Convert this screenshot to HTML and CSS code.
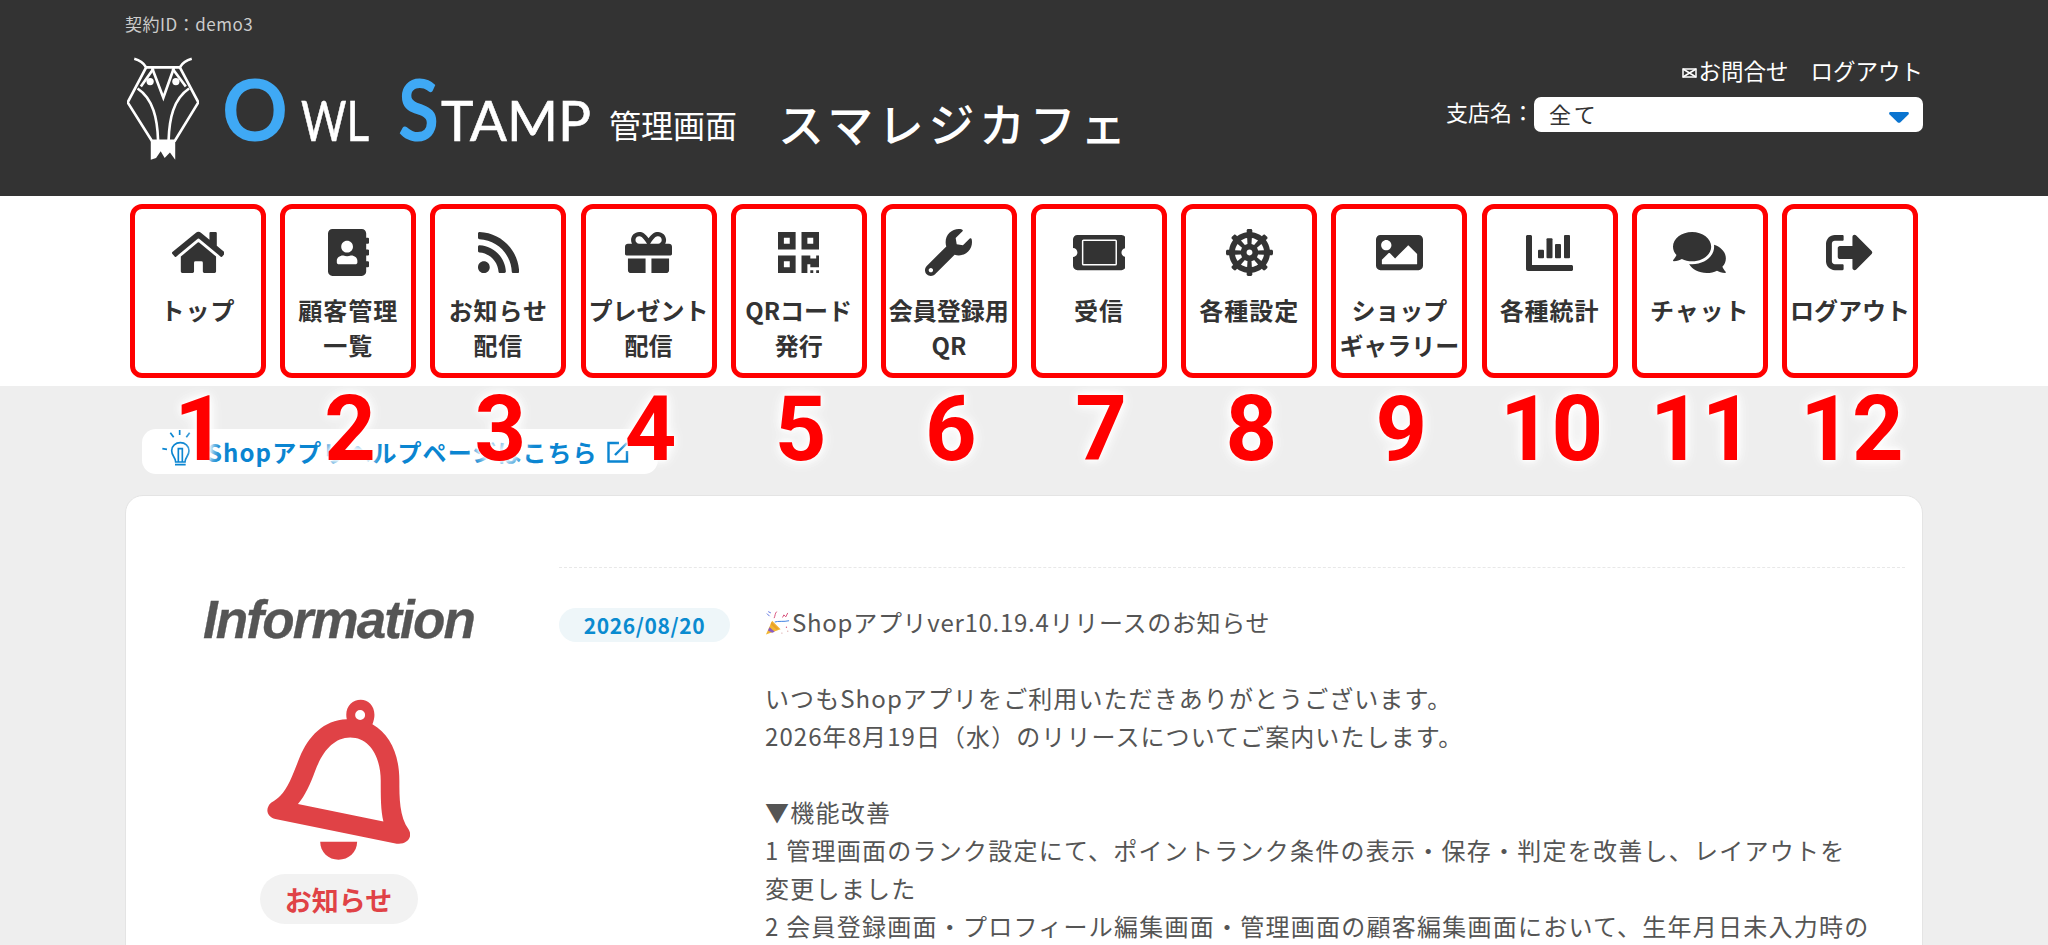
FILE: index.html
```html
<!DOCTYPE html>
<html lang="ja">
<head>
  <meta charset="UTF-8" />
  <title>OWL STAMP 管理画面</title>
  <link rel="stylesheet" href="styles.css">
</head>
<body>

  <!-- Header -->
  <header class="header">
    <div class="header-inner">
      <div class="contract">契約ID：demo3</div>
      <div class="header-row">
        <div class="brand">
          <svg class="owl" viewBox="20 14 218 312" fill="none" stroke="#fff" stroke-width="8">
            <path d="M42 18C58 22 70 30 78 44H180C188 30 200 22 216 18" />
            <path d="M78 44L22 150L95 266H165L236 150L180 44" />
            <path d="M96 46L130 136L162 46" />
            <path d="M100 48L62 102M158 48L198 102" />
            <path d="M52 108C100 140 112 200 114 264M208 108C160 140 148 200 146 264" />
            <circle cx="90" cy="87" r="11" fill="#fff" stroke="none" />
            <circle cx="168" cy="87" r="11" fill="#fff" stroke="none" />
            <path d="M92 268H166V324L150 302L134 318L122 298L108 318L92 324Z" fill="#fff" stroke="none" />
          </svg>
          <svg class="logo-text" viewBox="-10 -20 384 110">
            <text class="logo-big" x="-4" y="71" textLength="66" lengthAdjust="spacingAndGlyphs">O</text>
            <text class="logo-small" x="75" y="71" textLength="68" lengthAdjust="spacingAndGlyphs">WL</text>
            <text class="logo-big" x="172" y="71" textLength="41" lengthAdjust="spacingAndGlyphs">S</text>
            <text class="logo-small" x="215" y="71" textLength="150" lengthAdjust="spacingAndGlyphs">TAMP</text>
          </svg>
          <span class="brand-sub">管理画面</span>
          <span class="shop-name">スマレジカフェ</span>
        </div>
        <div class="header-right">
          <div class="header-links">
            <svg class="mail" viewBox="0 0 15 10" fill="none" stroke="#fff" stroke-width="1.5">
              <rect x="1" y="1" width="13" height="8" />
              <path d="M1 1L14 9M14 1L1 9" />
            </svg>
            <span>お問合せ</span>
            <span class="logout-link">ログアウト</span>
          </div>
          <div class="branch">
            <span class="branch-label">支店名：</span>
            <div class="branch-select">
              <span class="branch-value">全て</span>
              <svg class="select-arrow" viewBox="0 0 20 11"><path d="M1.5 0H18.5C19.8 0 20.4 1.4 19.4 2.4L11.2 10.4C10.5 11 9.5 11 8.8 10.4L.6 2.4C-.4 1.4.2 0 1.5 0Z" /></svg>
            </div>
          </div>
        </div>
      </div>
    </div>
  </header>

  <!-- Menu -->
  <nav class="nav">
    <a class="nav-item">
      <svg class="nav-icon" viewBox="0 0 576 512"><path d="M280.37 148.26L96 300.11V464a16 16 0 0 0 16 16l112.06-.29a16 16 0 0 0 15.92-16V368a16 16 0 0 1 16-16h64a16 16 0 0 1 16 16v95.64a16 16 0 0 0 16 16.05L464 480a16 16 0 0 0 16-16V300L295.67 148.26a12.19 12.19 0 0 0-15.3 0zM571.6 251.47L488 182.56V44.05a12 12 0 0 0-12-12h-56a12 12 0 0 0-12 12v72.61L318.47 43a48 48 0 0 0-61 0L4.34 251.47a12 12 0 0 0-1.6 16.9l25.5 31A12 12 0 0 0 45.15 301l235.22-193.74a12.19 12.19 0 0 1 15.3 0L530.9 301a12 12 0 0 0 16.9-1.6l25.5-31a12 12 0 0 0-1.7-16.93z" /></svg>
      <span class="nav-label">トップ</span>
    </a>
    <a class="nav-item">
      <svg class="nav-icon" viewBox="0 0 448 512"><path d="M436 160c6.6 0 12-5.4 12-12v-40c0-6.6-5.4-12-12-12h-20V48c0-26.5-21.5-48-48-48H48C21.5 0 0 21.5 0 48v416c0 26.5 21.5 48 48 48h320c26.5 0 48-21.5 48-48v-48h20c6.6 0 12-5.4 12-12v-40c0-6.6-5.4-12-12-12h-20v-64h20c6.6 0 12-5.4 12-12v-40c0-6.6-5.4-12-12-12h-20v-64h20zm-228-32c35.3 0 64 28.7 64 64s-28.7 64-64 64-64-28.7-64-64 28.7-64 64-64zm112 236.8c0 10.6-10 19.2-22.4 19.2H118.4C106 384 96 375.4 96 364.8v-19.2c0-31.8 30.1-57.6 67.2-57.6h5c12.3 5.1 25.7 8 39.8 8s27.6-2.9 39.8-8h5c37.1 0 67.2 25.8 67.2 57.6v19.2z" /></svg>
      <span class="nav-label">顧客管理<br>一覧</span>
    </a>
    <a class="nav-item">
      <svg class="nav-icon" viewBox="0 0 448 512"><path d="M128.081 415.959c0 35.369-28.672 64.041-64.041 64.041S0 451.328 0 415.959s28.672-64.041 64.041-64.041 64.04 28.673 64.04 64.041zm175.66 47.25c-8.354-154.6-132.185-278.587-286.95-286.95C7.656 175.765 0 183.105 0 192.253v48.069c0 8.415 6.49 15.472 14.887 16.018 111.832 7.284 201.473 96.702 208.772 208.772.547 8.397 7.604 14.887 16.018 14.887h48.069c9.149.001 16.489-7.655 15.995-16.79zm144.249.288C439.596 229.677 251.465 40.445 16.503 32.01 7.473 31.686 0 38.981 0 48.016v48.068c0 8.625 6.835 15.645 15.453 15.999 191.179 7.839 344.627 161.316 352.465 352.465.353 8.618 7.373 15.453 15.999 15.453h48.068c9.034-.001 16.329-7.474 16.005-16.504z" /></svg>
      <span class="nav-label">お知らせ<br>配信</span>
    </a>
    <a class="nav-item">
      <svg class="nav-icon" viewBox="0 0 512 512"><path d="M32 448c0 17.7 14.3 32 32 32h160V320H32v128zm256 32h160c17.7 0 32-14.3 32-32V320H288v160zm192-320h-42.1c6.2-12.1 10.1-25.5 10.1-40 0-48.5-39.5-88-88-88-41.6 0-68.5 21.3-103 68.3-34.5-47-61.4-68.3-103-68.3-48.5 0-88 39.5-88 88 0 14.5 3.8 27.9 10.1 40H32c-17.7 0-32 14.3-32 32v80c0 8.8 7.2 16 16 16h480c8.8 0 16-7.2 16-16v-80c0-17.7-14.3-32-32-32zm-326.1 0c-22.1 0-40-17.9-40-40s17.9-40 40-40c19.9 0 34.6 3.3 86.1 80h-86.1zm206.1 0h-86.1c51.4-76.5 65.7-80 86.1-80 22.1 0 40 17.9 40 40s-17.9 40-40 40z" /></svg>
      <span class="nav-label tight">プレゼント<br>配信</span>
    </a>
    <a class="nav-item">
      <svg class="nav-icon" viewBox="0 0 448 512"><path d="M0 224h192V32H0v192zM64 96h64v64H64V96zm192-64v192h192V32H256zm128 128h-64V96h64v64zM0 480h192V288H0v192zm64-128h64v64H64v-64zm352-64h32v128h-96v-32h-32v96h-64V288h96v32h64v-32zm0 160h32v32h-32v-32zm-64 0h32v32h-32v-32z" /></svg>
      <span class="nav-label tight">QRコード<br>発行</span>
    </a>
    <a class="nav-item">
      <svg class="nav-icon" viewBox="0 0 512 512"><path d="M507.73 109.1c-2.24-9.03-13.54-12.09-20.12-5.51l-74.36 74.36-67.88-11.31-11.31-67.88 74.36-74.36c6.62-6.62 3.43-17.9-5.66-20.16-47.38-11.74-99.55.91-136.58 37.93-39.64 39.64-50.55 97.1-34.05 147.2L18.74 402.76c-24.99 24.99-24.99 65.51 0 90.5 24.99 24.99 65.51 24.99 90.5 0l213.21-213.21c50.12 16.71 107.47 5.68 147.37-34.22 37.07-37.07 49.7-89.32 37.91-136.73zM64 472c-13.25 0-24-10.75-24-24 0-13.26 10.75-24 24-24s24 10.74 24 24c0 13.25-10.75 24-24 24z" /></svg>
      <span class="nav-label tight">会員登録用<br>QR</span>
    </a>
    <a class="nav-item">
      <svg class="nav-icon" viewBox="0 0 576 512"><path d="M528 256c0 26.51 21.49 48 48 48v96c0 26.51-21.49 48-48 48H48c-26.51 0-48-21.49-48-48v-96c26.51 0 48-21.49 48-48s-21.49-48-48-48v-96c0-26.51 21.49-48 48-48h480c26.51 0 48 21.49 48 48v96c-26.51 0-48 21.49-48 48z" /><rect x="105" y="122" width="366" height="268" rx="10" fill="none" stroke="#fff" stroke-width="16" /></svg>
      <span class="nav-label">受信</span>
    </a>
    <a class="nav-item">
      <svg class="nav-icon" viewBox="0 0 512 512"><path d="M495 225.06l-17.22 1.08c-5.27-39.49-20.79-75.64-43.86-105.84l12.95-11.43c6.92-6.11 7.25-16.79.73-23.31L426.44 64.4c-6.53-6.53-17.21-6.19-23.31.73L391.7 78.07c-30.2-23.07-66.35-38.59-105.84-43.86L286.94 17c.58-9.21-6.74-17-15.97-17h-29.94c-9.23 0-16.54 7.79-15.97 17l1.08 17.22c-39.49 5.27-75.64 20.79-105.84 43.86l-11.43-12.95c-6.11-6.92-16.79-7.25-23.31-.73L64.4 85.56c-6.53 6.53-6.19 17.21.73 23.31l12.95 11.43c-23.07 30.2-38.59 66.35-43.86 105.84L17 225.06c-9.21-.58-17 6.74-17 15.97v29.94c0 9.23 7.79 16.54 17 15.97l17.22-1.08c5.27 39.49 20.79 75.64 43.86 105.84l-12.95 11.43c-6.92 6.11-7.25 16.79-.73 23.31l21.16 21.16c6.53 6.53 17.21 6.19 23.31-.73l11.43-12.95c30.2 23.07 66.35 38.59 105.84 43.86L225.06 495c-.58 9.21 6.74 17 15.97 17h29.94c9.23 0 16.54-7.79 15.97-17l-1.08-17.22c39.49-5.27 75.64-20.79 105.84-43.86l11.43 12.95c6.11 6.92 16.79 7.25 23.31.73l21.16-21.16c6.53-6.53 6.19-17.21-.73-23.31l-12.95-11.43c23.07-30.2 38.59-66.35 43.86-105.84l17.22 1.08c9.21.58 17-6.74 17-15.97v-29.94c.01-9.23-7.78-16.55-16.99-15.97zM281.84 98.61c24.81 4.07 47.63 13.66 67.23 27.78l-42.62 48.29c-8.73-5.44-18.32-9.54-28.62-11.95l4.01-64.12zm-51.68 0l4.01 64.12c-10.29 2.41-19.89 6.52-28.62 11.95l-42.62-48.29c19.6-14.12 42.42-23.71 67.23-27.78zm-103.77 64.33l48.3 42.61c-5.44 8.73-9.54 18.33-11.96 28.62l-64.12-4.01c4.07-24.81 13.66-47.62 27.78-67.22zm-27.78 118.9l64.12-4.01c2.41 10.29 6.52 19.89 11.95 28.62l-48.29 42.62c-14.12-19.6-23.71-42.42-27.78-67.23zm131.59 131.55c-24.81-4.07-47.63-13.66-67.23-27.78l42.61-48.3c8.73 5.44 18.33 9.54 28.62 11.96l-4 64.12zM256 288c-17.67 0-32-14.33-32-32s14.33-32 32-32 32 14.33 32 32-14.33 32-32 32zm25.84 125.39l-4.01-64.12c10.29-2.41 19.89-6.52 28.62-11.95l42.62 48.29c-19.6 14.12-42.42 23.71-67.23 27.78zm103.77-64.33l-48.29-42.62c5.44-8.73 9.54-18.32 11.95-28.62l64.12 4.01c-4.07 24.82-13.66 47.64-27.78 67.23zm-36.34-114.89c-2.41-10.29-6.52-19.89-11.95-28.62l48.29-42.62c14.12 19.6 23.71 42.42 27.78 67.23l-64.12 4.01z" /></svg>
      <span class="nav-label">各種設定</span>
    </a>
    <a class="nav-item">
      <svg class="nav-icon" viewBox="0 0 512 512"><path d="M464 448H48c-26.51 0-48-21.49-48-48V112c0-26.51 21.49-48 48-48h416c26.51 0 48 21.49 48 48v288c0 26.51-21.49 48-48 48zM112 120c-30.928 0-56 25.072-56 56s25.072 56 56 56 56-25.072 56-56-25.072-56-56-56zM64 384h384V272l-87.515-87.515c-4.686-4.686-12.284-4.686-16.971 0L208 320l-55.515-55.515c-4.686-4.686-12.284-4.686-16.971 0L64 336v48z" /></svg>
      <span class="nav-label tight">ショップ<br>ギャラリー</span>
    </a>
    <a class="nav-item">
      <svg class="nav-icon" viewBox="0 0 47 47">
        <path d="M0 7.5C0 6.7.7 6 1.5 6H4.5C5.3 6 6 6.7 6 7.5V36H45.5C46.3 36 47 36.7 47 37.5V40.5C47 41.3 46.3 42 45.5 42H2C.9 42 0 41.1 0 40Z" />
        <rect x="12" y="20.7" width="6" height="8.6" rx="1" />
        <rect x="20.5" y="9.3" width="6" height="20" rx="1" />
        <rect x="29" y="15" width="6" height="14.3" rx="1" />
        <rect x="38" y="6" width="6" height="23.3" rx="1" />
      </svg>
      <span class="nav-label">各種統計</span>
    </a>
    <a class="nav-item">
      <svg class="nav-icon" viewBox="0 0 576 512"><path d="M416 192c0-88.4-93.1-160-208-160S0 103.6 0 192c0 34.3 14.1 65.9 38 92-13.4 30.2-35.5 54.2-35.8 54.5-2.2 2.3-2.8 5.7-1.5 8.7S4.8 352 8 352c36.6 0 66.9-12.3 88.7-25 32.2 15.7 70.3 25 111.3 25 114.9 0 208-71.6 208-160zm122 220c23.9-26 38-57.7 38-92 0-66.9-53.5-124.2-129.3-148.1.9 6.6 1.3 13.3 1.3 20.1 0 105.9-107.7 192-240 192-10.8 0-21.3-.8-31.7-1.9C207.8 439.6 281.8 480 368 480c41 0 79.1-9.2 111.3-25 21.8 12.7 52.1 25 88.7 25 3.2 0 6.1-1.9 7.3-4.8 1.3-2.9.7-6.3-1.5-8.7-.3-.3-22.4-24.2-35.8-54.5z" /></svg>
      <span class="nav-label">チャット</span>
    </a>
    <a class="nav-item">
      <svg class="nav-icon" viewBox="0 0 512 512"><path d="M497 273L329 441c-15 15-41 4.5-41-17v-96H152c-13.3 0-24-10.7-24-24v-96c0-13.3 10.7-24 24-24h136V88c0-21.4 25.9-32 41-17l168 168c9.3 9.4 9.3 24.6 0 34zM192 436v-40c0-6.6-5.4-12-12-12H96c-17.7 0-32-14.3-32-32V160c0-17.7 14.3-32 32-32h84c6.6 0 12-5.4 12-12V76c0-6.6-5.4-12-12-12H96c-53 0-96 43-96 96v192c0 53 43 96 96 96h84c6.6 0 12-5.4 12-12z" /></svg>
      <span class="nav-label tight">ログアウト</span>
    </a>
  </nav>

  <main class="main">
    <!-- Red numbers lie over the help link -->
    <div class="numbers">
      <span>1</span><span>2</span><span>3</span><span>4</span><span>5</span><span>6</span>
      <span>7</span><span>8</span><span>9</span><span>10</span><span>11</span><span>12</span>
    </div>

    <a class="help-link">
      <svg class="bulb" viewBox="60 30 90 108" fill="none" stroke="#0a85d1" stroke-width="5">
        <path d="M64 86L78 88M88 38L98 52M116 30V45M146 38L136 52" />
        <path d="M104 126C104 112 92 108 92 92C92 78 104 68 118 68C132 68 144 78 144 92C144 108 132 112 132 126Z" />
        <path d="M112 126V86H124V126M102 134H134" />
      </svg>
      <span>Shopアプリヘルプページはこちら</span>
      <svg class="ext" viewBox="0 0 22 22" fill="none" stroke="#0a85d1" stroke-width="2.4">
        <path d="M12 2H1.5V20.5H20V10" />
        <path d="M8 14L20 2" />
      </svg>
    </a>

    <section class="card">
      <div class="card-side">
        <h1 class="info-title">Information</h1>
        <svg class="bell" viewBox="440 415 430 485">
          <path fill-rule="evenodd" d="M445 735C452 722 462 724 480 705C505 680 518 640 538 590C565 525 610 478 680 475C672 440 695 416 722 416C750 416 775 445 757 490C810 520 838 580 838 660C838 710 838 770 866 806C880 830 860 853 830 849L465 775C445 770 435 752 445 735ZM533 730L790 782C782 750 782 710 782 660C782 590 750 530 690 530C640 530 605 575 585 630C570 670 555 705 533 730ZM720 447A15 15 0 1 0 720.1 477A15 15 0 1 0 720 447Z" />
          <path d="M600 843H711C711 875 685 897 655 897C625 897 600 875 600 843Z" />
        </svg>
        <div class="notice-pill">お知らせ</div>
      </div>
      <div class="card-body">
        <div class="entry">
          <div class="entry-date">2026/08/20</div>
          <div class="entry-text">
            <div class="entry-line narrow"><svg class="party" viewBox="30 25 80 80">
              <path d="M33 100L52 58L78 84Z" fill="#f2b632" />
              <path d="M44 78L60 92L52 95L39 88Z" fill="#8a5cc2" />
              <path d="M50 62L72 82L66 86L47 69Z" fill="#e9a12a" />
              <path d="M60 62C70 58 88 62 104 58" fill="none" stroke="#3d7fe0" stroke-width="3" />
              <path d="M58 50C62 42 60 36 66 30M84 48L88 40L94 46L100 34" fill="none" stroke="#d8507a" stroke-width="3" />
              <path d="M36 36L44 44M40 30L48 34" fill="none" stroke="#5a6fe0" stroke-width="3" />
              <circle cx="96" cy="78" r="2" fill="#d8507a" />
              <circle cx="100" cy="90" r="2" fill="#d8a0a0" />
              <circle cx="82" cy="96" r="2" fill="#d8a0a0" />
            </svg>Shopアプリver10.19.4リリースのお知らせ</div>
            <div class="entry-line">&nbsp;</div>
            <div class="entry-line">いつもShopアプリをご利用いただきありがとうございます。</div>
            <div class="entry-line">2026年8月19日（水）のリリースについてご案内いたします。</div>
            <div class="entry-line">&nbsp;</div>
            <div class="entry-line wide">▼機能改善</div>
            <div class="entry-line wide">1 管理画面のランク設定にて、ポイントランク条件の表示・保存・判定を改善し、レイアウトを</div>
            <div class="entry-line wide">変更しました</div>
            <div class="entry-line wide">2 会員登録画面・プロフィール編集画面・管理画面の顧客編集画面において、生年月日未入力時の</div>
          </div>
        </div>
      </div>
    </section>
  </main>

</body>
</html>
```

FILE: styles.css
```css
* {
  box-sizing: border-box;
}

html, body {
  height: 100%;
}

body {
  margin: 0;
  height: 945px;
  overflow: hidden;
  background: #eeeeee;
  color: #333333;
  font-family: "Noto Sans CJK JP", "Noto Sans", sans-serif;
}

/* Header */
.header {
  height: 196px;
  background: #333333;
  color: #ffffff;
}

.header-inner {
  width: 1798px;
  margin: 0 auto;
}

.contract {
  padding-top: 11px;
  height: 57px;
  font-size: 17px;
  line-height: 26px;
  letter-spacing: 0.03em;
  color: #cccccc;
}

.header-row {
  display: flex;
  justify-content: space-between;
}

.brand {
  display: flex;
  align-items: flex-start;
  padding-left: 2px;
}

.owl {
  width: 72px;
  height: 104px;
}

.logo-text {
  width: 384px;
  height: 110px;
  margin-top: -7px;
  margin-left: 17px;
}

.logo-big {
  font-family: "Lato", sans-serif;
  font-size: 86px;
  font-weight: 700;
  fill: #3fa9f5;
}

.logo-small {
  font-family: "Lato", sans-serif;
  font-size: 57px;
  font-weight: 400;
  fill: #ffffff;
  stroke: #ffffff;
  stroke-width: 0.6px;
}

.brand-sub {
  margin-left: 9px;
  margin-top: 44px;
  font-size: 32px;
  line-height: 46px;
}

.shop-name {
  margin-left: 41px;
  margin-top: 33px;
  font-size: 46px;
  font-weight: 500;
  line-height: 64px;
  letter-spacing: 0.1em;
}

.header-right {
  display: flex;
  flex-direction: column;
  align-items: flex-end;
  margin-top: -3px;
}

.header-links {
  display: flex;
  align-items: center;
  height: 32px;
  font-size: 22.5px;
  margin-bottom: 9px;
}

.mail {
  width: 15px;
  height: 10px;
  margin-top: 6px;
  margin-right: 1px;
}

.logout-link {
  margin-left: 22px;
}

.branch {
  display: flex;
  align-items: center;
  font-size: 22px;
}

.branch-label {
  padding-bottom: 7px;
}

.branch-select {
  width: 389px;
  height: 35px;
  display: flex;
  align-items: center;
  justify-content: space-between;
  padding: 0 14px 3px 15px;
  background: #ffffff;
  border-radius: 7px;
  color: #333333;
}

.branch-value {
  letter-spacing: 0.12em;
}

.select-arrow {
  width: 20px;
  height: 11px;
  margin-top: 9px;
  fill: #0a74d0;
}

/* Menu */
.nav {
  height: 190px;
  padding: 8px 130px 0;
  display: flex;
  justify-content: space-between;
  background: #ffffff;
}

.nav-item {
  width: 136px;
  height: 174px;
  padding-top: 20px;
  display: flex;
  flex-direction: column;
  align-items: center;
  border: 5px solid #ff0000;
  border-radius: 12px;
}

.nav-icon {
  height: 47px;
  flex-shrink: 0;
  fill: #333333;
}

.nav-label {
  margin-top: 16px;
  font-size: 24px;
  font-weight: 700;
  line-height: 35px;
  letter-spacing: 0.04em;
  text-align: center;
  white-space: nowrap;
}

.nav-label.tight {
  letter-spacing: 0;
}

/* Main */
.main {
  position: relative;
  padding-top: 43px;
}

.numbers {
  position: absolute;
  top: -1px;
  left: 132px;
  width: 1788px;
  display: flex;
  justify-content: space-between;
}

.numbers span {
  width: 136px;
  font-family: "Roboto", sans-serif;
  font-size: 90px;
  font-weight: 700;
  line-height: 90px;
  text-align: center;
  color: #ff0000;
  text-shadow: 0 0 3px #ffffff, 0 0 6px #ffffff, 0 0 12px #ffffff, 0 0 16px #ffffff;
}

.help-link {
  width: 516px;
  height: 45px;
  margin-left: 142px;
  padding-left: 19px;
  display: flex;
  align-items: center;
  background: #ffffff;
  border-radius: 14px;
  color: #0a85d1;
  font-size: 24px;
  font-weight: 700;
  letter-spacing: 0.045em;
}

.bulb {
  width: 30px;
  height: 36px;
  margin-right: 16px;
  margin-bottom: 8px;
}

.ext {
  width: 22px;
  height: 22px;
  margin-left: 9px;
}

.card {
  width: 1798px;
  height: 800px;
  margin: 21px auto 0;
  display: flex;
  background: #ffffff;
  border: 1px solid #e4e4e4;
  border-radius: 18px;
}

.card-side {
  width: 425px;
  display: flex;
  flex-direction: column;
  align-items: center;
}

.info-title {
  margin: 94px 0 0;
  font-family: "Liberation Sans", sans-serif;
  font-size: 53px;
  font-style: italic;
  font-weight: 700;
  line-height: 60px;
  letter-spacing: -0.035em;
  -webkit-text-stroke: 0.3px #555555;
  color: #555555;
}

.bell {
  width: 143px;
  height: 162px;
  margin-top: 49px;
  fill: #e04246;
}

.notice-pill {
  width: 158px;
  height: 50px;
  margin-top: 13px;
  display: flex;
  align-items: center;
  justify-content: center;
  background: #f2f2f2;
  border-radius: 25px;
  color: #e04246;
  font-size: 27px;
  font-weight: 700;
}

.card-body {
  width: 1346px;
  margin-top: 71px;
  margin-left: 8px;
}

.entry {
  display: flex;
  padding-top: 35px;
  border-top: 1px dashed #e8e8e8;
}

.entry-date {
  width: 171px;
  height: 34px;
  margin-top: 5px;
  flex-shrink: 0;
  display: flex;
  align-items: center;
  justify-content: center;
  background: #eef6f9;
  border-radius: 17px;
  color: #0a8bd0;
  font-size: 21px;
  font-weight: 700;
  letter-spacing: 0.03em;
}

.entry-text {
  margin-left: 35px;
  font-size: 24px;
  line-height: 38px;
  letter-spacing: 0.045em;
  color: #555555;
}

.entry-line {
  white-space: nowrap;
}

.entry-line.narrow {
  letter-spacing: 0.03em;
}

.entry-line.wide {
  letter-spacing: 0.052em;
}

.party {
  width: 26px;
  height: 26px;
  vertical-align: -4px;
  margin-right: 1px;
}
```
